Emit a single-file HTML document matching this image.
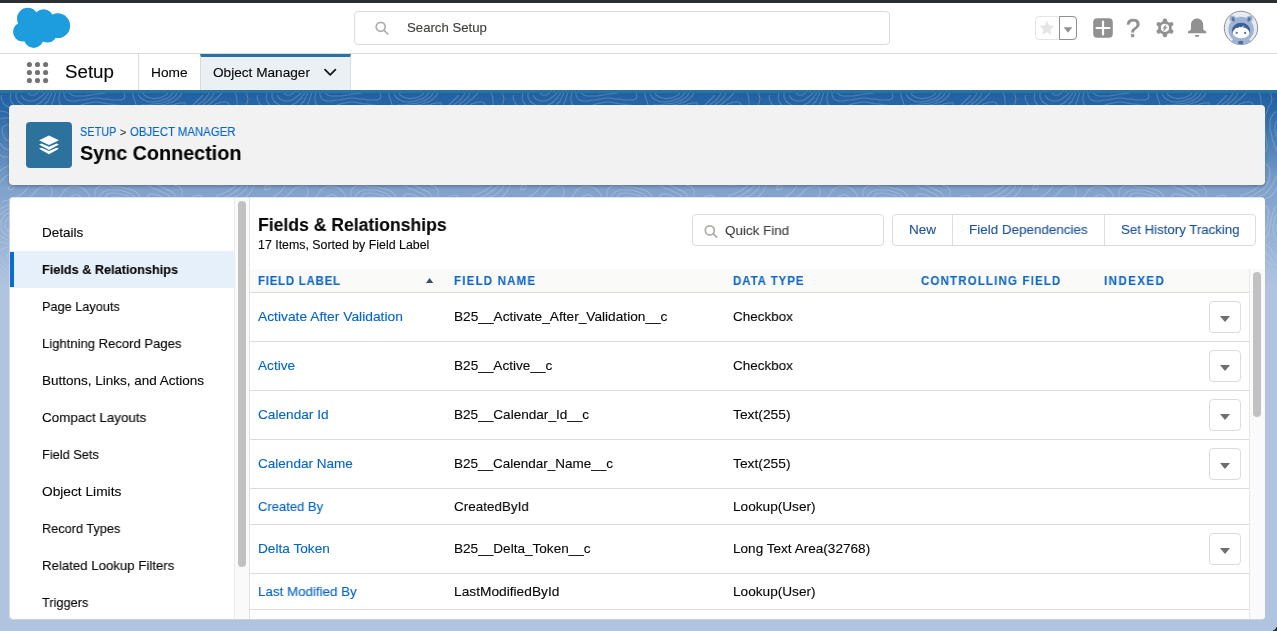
<!DOCTYPE html>
<html lang="en">
<head>
<meta charset="utf-8">
<title>Sync Connection | Salesforce</title>
<style>
*{box-sizing:border-box;margin:0;padding:0}
html,body{width:1277px;height:631px;overflow:hidden}
body{position:relative;background:#b0c4df;font-family:"Liberation Sans",sans-serif;font-size:13px;color:#181818}
.abs{position:absolute}
.t{position:absolute;white-space:pre;line-height:20px;height:20px;transform-origin:0 50%;will-change:transform;-webkit-text-stroke:0.12px}
#bg{left:0;top:93px;width:1277px;height:538px;background:linear-gradient(to bottom,#2060a2 0px,#2b68a7 18px,#80a1cb 95px,#b0c4df 195px)}
#topbar{left:0;top:0;width:1277px;height:3px;background:#2b2e32}
#hdr{left:0;top:3px;width:1277px;height:51px;background:#fff;border-bottom:1px solid #dddbda}
#nav{left:0;top:54px;width:1277px;height:39px;background:#fff;border-bottom:3px solid #2a739e}
#search{left:354px;top:11px;width:536px;height:34px;border:1px solid #dddbda;border-radius:4px;background:#fff}
#tab{left:200px;top:54px;width:151px;height:36px;background:#eaf0f4;border-top:3px solid #2a739e;border-right:1px solid #dcdcdc;border-left:1px solid #dcd8d6}
#div1{left:138px;top:54px;width:1px;height:36px;background:#dddbda}
#ph{left:9px;top:105px;width:1256px;height:80px;background:#f3f2f2;border-radius:4px;box-shadow:0 2px 3px rgba(0,0,0,.22)}
#phicon{left:26px;top:122px;width:46px;height:46px;border-radius:4px;background:#2d729d}
#card{left:9px;top:197px;width:1256px;height:423px;background:#fff;background-clip:padding-box;border-left:1px solid rgba(240,240,240,.55);border-bottom:1px solid rgba(225,225,225,.5);border-radius:4px;overflow:hidden}
#selbg{left:0;top:54px;width:224px;height:37px;background:#e5f0fa}
#selbar{left:0;top:55px;width:4px;height:35px;background:#0b6bd2}
#strack{left:224px;top:0;width:16px;height:423px;background:#fafafa;border-left:1px solid #ebebeb;border-right:1px solid #e4e2e1}
#sthumb{left:228px;top:4px;width:8px;height:366px;background:#c1c1c1;border-radius:4px}
#ttrack{left:1239px;top:72px;width:16px;height:351px;background:#fafafa;border-left:1px solid #e8e8e8}
#tthumb{left:1243px;top:75px;width:8px;height:145px;background:#c1c1c1;border-radius:4px}
#thead{left:240px;top:72px;width:999px;height:24px;background:#fafaf9;border-bottom:1px solid #dddbda}
.rl{position:absolute;left:240px;width:999px;height:1px;background:#dddbda}
.dd{position:absolute;left:1199px;width:32px;height:32px;border:1px solid #dddbda;border-radius:4px;background:#fff}
.dd:after{content:"";position:absolute;left:9.5px;top:13.5px;border-left:5.5px solid transparent;border-right:5.5px solid transparent;border-top:6.5px solid #706e6b}
#qf{left:682px;top:17px;width:192px;height:32px;border:1px solid #dddbda;border-radius:4px;background:#fff}
#bg1{left:882px;top:17px;width:364px;height:32px;border:1px solid #dddbda;border-radius:4px;background:#fff}
.bd{position:absolute;top:18px;width:1px;height:30px;background:#dddbda}
</style>
</head>
<body>
<div id="bg" class="abs"></div>
<svg class="abs" style="left:0;top:93px" width="1277" height="210" viewBox="0 0 1277 210">
<defs>
<pattern id="topo" width="256" height="210" patternUnits="userSpaceOnUse"><path d="M173 30 L174 26 L172 23 L168 22 L167 22 L164 22 L161 24 L159 26 L160 29 L162 31 L166 32 L170 32 L173 30M208 68 L210 66 L211 64 L211 60 L210 58 L208 56 L206 54 L202 53 L198 53 L196 54 L194 57 L194 60 L194 62 L196 65 L198 67 L200 68 L204 69 L208 68M45 210 L45 208 L45 206 L44 205 L43 204 L42 204 L40 203 L38 203 L36 203 L34 203 L32 204 L32 204 L30 206 L30 207 L30 208 L30 210M176 34 L178 32 L178 30 L179 26 L178 23 L176 20 L174 19 L170 18 L166 18 L162 19 L160 20 L156 22 L154 24 L154 26 L154 29 L156 32 L158 33 L160 34 L164 35 L168 35 L172 35 L176 34M211 72 L214 70 L215 68 L216 64 L215 60 L214 58 L212 55 L210 53 L208 52 L204 50 L202 49 L198 49 L194 50 L192 51 L191 54 L190 58 L191 62 L192 66 L193 68 L196 70 L198 71 L200 72 L204 73 L208 73 L211 72M161 142 L164 140 L165 138 L164 136 L160 134 L158 134 L156 134 L152 136 L152 138 L152 140 L155 142 L158 143 L161 142M101 172 L103 170 L103 166 L101 164 L99 162 L96 161 L93 160 L90 160 L88 161 L86 164 L86 166 L86 168 L88 171 L90 173 L94 173 L98 173 L101 172M51 210 L51 206 L50 202 L48 200 L46 199 L43 198 L40 198 L36 198 L34 198 L30 200 L28 200 L26 202 L24 205 L23 208M153 210 L155 208 L157 206 L158 204 L158 202 L156 200 L152 200 L150 200 L147 202 L145 204 L144 207 L144 209M178 38 L180 37 L182 34 L182 32 L183 28 L182 24 L182 22 L181 18 L179 16 L176 15 L172 15 L168 15 L165 16 L162 17 L158 18 L156 19 L153 20 L151 22 L150 24 L149 28 L150 30 L152 33 L154 34 L157 36 L160 37 L164 38 L167 38 L170 38 L174 38 L178 38M217 76 L219 74 L220 70 L220 68 L220 66 L219 62 L218 59 L217 56 L215 54 L213 52 L210 50 L208 49 L206 48 L202 47 L200 46 L196 45 L192 46 L190 46 L188 49 L187 52 L187 56 L188 60 L188 63 L189 66 L190 69 L192 72 L194 74 L196 75 L199 76 L202 77 L206 77 L210 78 L214 77 L217 76M124 118 L126 116 L126 114 L126 112 L124 110 L120 108 L116 108 L114 110 L113 114 L115 116 L118 118 L120 118 L124 118M18 132 L17 130 L16 130 L14 130 L14 130 L13 132 L14 133 L16 134 L18 132M159 146 L162 146 L166 144 L168 142 L170 140 L170 138 L170 134 L168 132 L166 131 L162 130 L159 130 L157 130 L154 130 L150 131 L148 132 L146 135 L146 138 L147 140 L148 142 L151 144 L154 145 L157 146 L159 146M98 178 L102 177 L104 176 L107 174 L109 172 L110 168 L109 164 L107 162 L105 160 L102 158 L100 157 L98 155 L96 154 L93 152 L90 150 L88 150 L84 150 L82 151 L80 153 L78 156 L77 158 L76 161 L75 164 L74 167 L74 170 L74 174 L75 176 L78 178 L80 179 L84 179 L88 179 L92 179 L96 178 L98 178M56 210 L56 208 L57 204 L56 200 L55 198 L53 196 L50 195 L47 194 L44 194 L40 194 L38 194 L34 195 L30 196 L28 196 L24 198 L22 199 L20 201 L19 204 L18 208M158 210 L159 208 L161 206 L162 203 L162 200 L161 198 L158 196 L154 196 L150 197 L148 198 L145 200 L143 202 L142 204 L140 207 L139 210M69 0 L72 2 L74 3 L78 3 L82 3 L86 3 L90 2 L92 2 L96 1 L100 1 L104 0 L106 0M223 92 L226 91 L228 89 L230 86 L230 84 L230 82 L228 78 L227 76 L226 72 L225 70 L224 66 L224 64 L222 60 L221 58 L220 56 L218 53 L216 51 L214 50 L211 48 L208 46 L206 46 L202 44 L200 44 L196 42 L194 42 L190 40 L188 38 L187 36 L186 32 L186 30 L186 26 L186 22 L186 18 L186 14 L185 10 L182 10 L180 10 L176 11 L172 12 L170 12 L166 13 L163 14 L160 15 L156 16 L154 16 L150 18 L148 20 L146 22 L146 24 L146 28 L146 30 L148 34 L150 35 L152 37 L156 38 L158 39 L162 39 L165 40 L168 40 L172 41 L176 42 L178 42 L181 44 L183 46 L184 50 L184 52 L185 56 L185 60 L185 64 L186 68 L186 70 L188 74 L190 76 L192 78 L194 79 L197 80 L200 81 L203 82 L206 83 L208 84 L211 86 L213 88 L215 90 L218 92 L220 92 L223 92M12 48 L14 47 L16 44 L17 42 L17 38 L16 36 L14 34 L10 32 L8 32 L6 32 L3 34 L2 38 L3 42 L4 44 L6 47 L9 48 L12 48M132 122 L133 120 L133 116 L132 113 L130 110 L129 108 L126 106 L124 105 L121 104 L118 104 L114 104 L112 104 L109 106 L108 108 L107 112 L108 116 L109 118 L112 120 L114 121 L116 122 L120 123 L124 123 L128 123 L132 122M197 112 L200 110 L202 108 L203 106 L202 103 L198 102 L194 103 L192 105 L190 108 L190 110 L190 112 L194 113 L197 112M21 140 L24 138 L25 136 L26 134 L26 130 L26 128 L24 125 L22 124 L18 122 L14 122 L10 124 L8 125 L6 128 L5 130 L5 134 L6 136 L8 138 L12 140 L14 141 L18 141 L21 140M163 148 L166 147 L168 146 L171 144 L172 142 L174 139 L175 136 L175 132 L173 130 L170 128 L168 128 L164 127 L160 127 L156 127 L152 127 L148 127 L145 128 L142 129 L141 132 L141 136 L142 138 L144 142 L146 144 L148 146 L150 147 L154 148 L156 148 L160 148 L163 148M60 210 L60 208 L61 204 L62 201 L63 198 L64 194 L65 192 L67 190 L70 188 L72 188 L76 187 L78 186 L82 185 L86 184 L88 184 L92 183 L95 182 L98 181 L102 180 L104 179 L106 178 L109 176 L112 174 L113 172 L114 168 L114 167 L113 164 L112 162 L110 160 L108 158 L105 156 L103 154 L100 152 L98 150 L96 148 L94 146 L92 145 L90 143 L86 142 L82 143 L80 144 L78 146 L76 148 L74 151 L72 154 L70 156 L69 158 L68 160 L66 163 L64 166 L63 168 L62 170 L61 174 L60 178 L60 180 L58 184 L56 186 L54 187 L52 188 L48 189 L44 190 L42 190 L38 191 L34 192 L32 192 L28 193 L24 194 L22 194 L18 196 L16 197 L14 199 L13 202 L13 206 L14 210M248 194 L251 192 L252 190 L252 187 L250 184 L249 182 L247 180 L244 178 L242 176 L240 175 L238 173 L236 172 L233 170 L230 168 L228 168 L228 169 L230 172 L232 174 L233 176 L234 178 L235 182 L236 185 L237 188 L238 191 L240 194 L242 195 L246 195 L248 194M161 210 L162 208 L164 205 L165 202 L165 198 L164 196 L161 194 L158 194 L154 194 L152 194 L148 196 L146 197 L144 198 L142 200 L140 202 L138 205 L137 208 L136 210M64 0 L64 2 L66 6 L68 7 L71 8 L74 8 L76 8 L80 7 L84 7 L88 6 L90 6 L94 5 L98 5 L102 6 L106 6 L108 6 L112 7 L116 7 L120 7 L124 6 L125 4 L124 0M182 0 L181 2 L179 4 L177 6 L174 8 L172 9 L169 10 L166 11 L162 12 L160 12 L156 13 L153 14 L150 15 L147 16 L144 18 L143 20 L142 22 L142 26 L142 29 L143 32 L144 35 L146 37 L148 38 L152 40 L154 40 L158 41 L162 41 L165 42 L168 43 L172 44 L174 44 L177 46 L179 48 L180 50 L182 54 L182 56 L182 60 L183 64 L183 68 L183 72 L182 76 L182 78 L180 81 L177 82 L174 83 L170 83 L168 84 L165 86 L166 89 L168 90 L172 91 L174 92 L178 93 L180 94 L182 98 L182 100 L182 104 L182 108 L182 110 L182 114 L181 118 L180 121 L178 123 L174 124 L171 124 L168 124 L164 124 L160 125 L156 124 L152 124 L150 124 L146 123 L143 122 L140 120 L139 118 L138 116 L136 112 L135 110 L134 108 L132 106 L129 104 L126 102 L124 102 L120 101 L116 100 L112 100 L108 101 L106 103 L104 105 L103 108 L103 112 L103 116 L104 118 L106 121 L108 123 L111 124 L114 125 L118 126 L120 126 L124 127 L128 128 L130 128 L133 130 L135 132 L136 134 L138 138 L139 140 L140 142 L142 144 L144 146 L147 148 L150 149 L153 150 L156 150 L160 151 L164 150 L166 150 L170 148 L172 147 L174 145 L176 142 L177 140 L178 138 L179 134 L180 131 L181 128 L182 125 L184 123 L187 122 L190 121 L193 120 L196 119 L198 117 L200 116 L203 114 L206 112 L208 110 L210 108 L212 107 L214 105 L216 104 L219 102 L222 101 L224 100 L228 98 L230 97 L232 95 L234 94 L236 92 L238 88 L239 86 L239 82 L238 79 L236 76 L235 74 L233 72 L231 70 L230 68 L228 64 L227 62 L226 60 L224 57 L222 54 L220 52 L218 50 L216 48 L214 47 L212 46 L208 44 L206 43 L203 42 L200 41 L198 40 L194 38 L192 36 L191 34 L190 32 L189 28 L189 24 L189 20 L190 17 L191 14 L193 12 L195 10 L197 8 L199 6 L201 4 L203 2M0 50 L2 53 L4 55 L6 56 L10 57 L13 56 L16 54 L18 52 L20 50 L21 48 L22 46 L23 42 L23 38 L22 34 L21 32 L19 30 L16 28 L14 27 L11 26 L8 25 L4 25 L0 26M256 26 L255 26 L254 27 L253 28 L252 30 L252 30 L251 32 L251 34 L251 36 L251 38 L252 40 L252 41 L252 42 L253 44 L254 46 L254 47 L255 48 L256 50 L256 50M129 64 L132 62 L133 60 L133 56 L132 52 L130 50 L128 49 L124 49 L120 49 L118 50 L116 52 L115 56 L116 59 L118 61 L120 63 L123 64 L126 64 L129 64M23 144 L26 143 L28 141 L30 138 L31 136 L31 132 L31 128 L30 124 L29 122 L27 120 L24 118 L22 118 L18 118 L14 118 L12 118 L8 120 L6 121 L4 123 L2 126 L1 128 L1 132 L1 136 L2 138 L4 140 L6 142 L10 144 L12 144 L16 145 L20 145 L23 144M64 210 L65 208 L66 204 L67 202 L68 200 L70 197 L72 195 L74 193 L76 192 L80 190 L82 189 L86 188 L88 187 L92 186 L94 185 L98 184 L100 183 L104 182 L106 181 L108 180 L111 178 L114 176 L115 174 L116 172 L117 168 L117 164 L116 162 L114 160 L112 158 L110 156 L108 154 L105 152 L103 150 L101 148 L100 146 L98 144 L96 142 L94 140 L92 138 L88 137 L84 137 L81 138 L78 140 L76 141 L74 143 L72 145 L70 148 L68 150 L67 152 L65 154 L63 156 L61 158 L59 160 L58 162 L56 165 L55 168 L54 170 L53 174 L52 177 L50 180 L49 182 L46 184 L44 185 L42 186 L38 188 L36 188 L32 189 L28 190 L26 190 L22 191 L18 191 L14 191 L10 190 L8 189 L6 188 L4 186 L2 184 L0 182M256 182 L254 180 L252 178 L250 176 L248 174 L246 171 L244 169 L242 167 L240 165 L238 163 L236 162 L233 160 L230 159 L226 159 L222 160 L220 160 L216 162 L214 163 L212 164 L210 166 L210 168 L212 170 L215 172 L218 174 L220 175 L222 176 L225 178 L227 180 L228 182 L230 186 L230 188 L231 192 L231 196 L232 200 L232 204 L232 206 L236 207 L238 206 L242 205 L244 204 L248 202 L250 202 L254 201M163 210 L165 208 L166 206 L168 202 L168 200 L168 196 L167 194 L165 192 L162 191 L158 191 L154 192 L152 192 L148 194 L146 195 L144 196 L141 198 L139 200 L137 202 L136 204 L134 208 L133 210M0 201 L2 202 L2 202 L4 203 L5 204 L6 205 L7 206 L8 208 L8 208 L9 210M60 0 L59 4 L59 8 L60 11 L62 13 L65 14 L68 14 L72 14 L74 14 L78 13 L81 12 L84 11 L88 10 L90 10 L94 9 L98 9 L102 10 L104 10 L108 11 L112 11 L116 12 L118 12 L122 13 L126 13 L130 13 L134 13 L136 16 L136 18 L137 22 L138 26 L138 28 L139 32 L139 36 L140 38 L142 40 L146 42 L148 42 L152 42 L156 43 L160 43 L164 44 L166 44 L170 45 L172 46 L175 48 L177 50 L178 52 L180 56 L180 59 L180 62 L180 65 L180 68 L178 72 L177 74 L174 76 L172 77 L168 78 L166 78 L162 79 L159 80 L156 81 L154 82 L153 86 L154 89 L156 91 L158 92 L162 94 L164 95 L166 96 L170 98 L172 99 L174 101 L176 104 L177 106 L177 110 L176 114 L175 116 L173 118 L170 120 L168 121 L164 122 L160 122 L156 122 L152 121 L148 120 L146 119 L144 118 L142 115 L140 112 L139 110 L138 108 L136 105 L134 103 L132 102 L129 100 L126 99 L123 98 L120 97 L116 97 L112 97 L108 97 L105 98 L102 100 L100 102 L99 104 L99 108 L99 112 L99 116 L99 120 L100 122 L102 126 L104 127 L108 128 L110 128 L114 128 L118 129 L122 130 L124 130 L128 132 L130 133 L132 135 L134 138 L135 140 L136 142 L138 144 L140 147 L142 148 L146 150 L148 151 L152 152 L154 152 L158 152 L162 152 L166 152 L168 152 L172 150 L174 149 L176 147 L178 144 L179 142 L180 140 L182 136 L183 134 L184 132 L186 130 L188 128 L190 126 L193 124 L196 122 L198 121 L200 120 L203 118 L206 116 L208 114 L210 113 L212 111 L214 110 L217 108 L220 106 L222 105 L225 104 L228 103 L230 102 L233 100 L236 98 L238 97 L240 95 L242 93 L244 90 L244 88 L246 84 L246 82 L246 78 L246 76 L244 73 L242 71 L240 70 L238 68 L236 66 L234 64 L232 62 L230 59 L228 56 L226 54 L224 52 L222 50 L220 48 L218 47 L216 46 L213 44 L210 43 L208 42 L204 40 L202 39 L199 38 L196 36 L194 34 L193 32 L192 28 L192 26 L192 22 L193 20 L194 17 L196 14 L198 12 L200 10 L202 9 L204 7 L206 5 L208 2 L209 0M177 0 L176 2 L174 4 L171 6 L168 8 L166 8 L162 10 L160 10 L156 11 L152 11 L148 12 L146 12 L142 12 L138 13 L136 12 L135 8 L134 6 L133 2 L132 0M0 62 L3 64 L6 64 L10 64 L12 63 L15 62 L18 60 L20 58 L22 56 L23 54 L24 52 L26 48 L27 46 L28 42 L28 40 L28 36 L28 34 L26 30 L24 28 L22 26 L20 25 L18 24 L14 22 L12 21 L8 20 L6 19 L2 18 L0 18M256 18 L254 18 L250 20 L249 22 L247 24 L246 28 L246 30 L246 34 L246 37 L247 40 L248 44 L248 46 L250 50 L250 52 L252 56 L253 58 L254 60 L256 62M134 68 L136 66 L137 64 L138 60 L138 58 L138 54 L138 52 L137 48 L136 46 L132 44 L130 44 L126 44 L124 44 L120 45 L116 46 L114 46 L111 48 L110 50 L109 54 L110 57 L111 60 L113 62 L115 64 L118 66 L120 67 L122 68 L126 69 L130 69 L134 68M0 143 L2 144 L6 146 L8 147 L12 148 L16 148 L18 148 L22 148 L24 148 L28 147 L31 146 L33 144 L34 142 L35 138 L36 134 L36 130 L36 126 L35 122 L35 118 L34 116 L32 114 L28 113 L24 113 L20 113 L16 114 L14 114 L10 115 L8 116 L4 118 L2 120 L0 122M256 122 L255 124 L254 126 L254 127 L254 128 L253 130 L253 132 L253 134 L253 136 L253 138 L254 140 L254 140 L255 142 L256 143M68 210 L69 208 L70 205 L72 202 L73 200 L75 198 L78 196 L80 194 L82 193 L85 192 L88 190 L90 190 L94 188 L96 187 L99 186 L102 185 L105 184 L108 183 L110 182 L113 180 L115 178 L117 176 L119 174 L120 171 L121 168 L120 164 L120 162 L118 159 L116 157 L114 155 L112 154 L110 152 L108 150 L106 148 L104 146 L102 143 L101 140 L100 138 L98 135 L96 133 L94 132 L90 131 L86 132 L84 132 L80 134 L78 134 L75 136 L73 138 L71 140 L69 142 L67 144 L66 146 L64 148 L62 150 L59 152 L57 154 L54 156 L52 158 L51 160 L50 162 L48 166 L48 169 L47 172 L46 176 L45 178 L44 180 L41 182 L38 184 L36 185 L32 186 L30 186 L26 187 L22 187 L18 187 L14 186 L12 186 L9 184 L6 182 L4 180 L2 178 L0 176M256 176 L254 174 L252 172 L250 170 L249 168 L247 166 L246 164 L244 162 L242 160 L240 158 L236 156 L234 155 L230 155 L226 155 L222 156 L220 156 L216 157 L214 158 L210 160 L208 160 L205 162 L202 163 L200 165 L198 167 L196 170 L198 172 L202 173 L205 174 L208 175 L212 176 L214 177 L217 178 L220 180 L222 182 L224 184 L225 186 L226 189 L227 192 L227 196 L226 199 L225 202 L224 205 L223 208 L222 210M166 210 L167 208 L168 206 L170 202 L170 200 L171 196 L171 192 L169 190 L166 189 L162 189 L158 189 L154 190 L152 191 L148 192 L146 193 L144 194 L141 196 L138 198 L136 200 L135 202 L134 204 L132 207 L130 210M0 78 L2 76 L4 75 L6 74 L10 72 L12 71 L14 70 L18 68 L20 66 L22 64 L24 62 L25 60 L26 58 L28 55 L29 52 L30 50 L31 46 L32 42 L32 40 L33 36 L33 32 L32 28 L31 26 L28 24 L26 23 L24 22 L20 20 L18 19 L15 18 L12 16 L10 15 L8 14 L5 12 L3 10 L2 8 L1 4 L2 2M56 0 L55 2 L54 5 L53 8 L52 11 L52 14 L53 16 L55 18 L58 19 L62 20 L64 20 L68 20 L72 20 L76 20 L78 20 L82 18 L84 18 L88 16 L90 15 L94 15 L98 14 L102 14 L106 15 L110 15 L114 16 L116 16 L120 17 L124 18 L126 18 L129 20 L131 22 L132 24 L134 28 L134 32 L133 36 L130 38 L128 39 L124 40 L122 40 L118 41 L114 41 L110 42 L108 43 L106 44 L104 46 L103 50 L104 54 L105 56 L106 59 L108 62 L109 64 L111 66 L114 68 L116 69 L118 70 L122 72 L124 72 L128 73 L132 74 L135 74 L138 74 L140 73 L141 70 L142 66 L142 62 L142 58 L142 55 L142 52 L144 48 L146 47 L148 46 L152 45 L156 45 L160 45 L164 46 L166 46 L170 48 L172 49 L174 51 L176 53 L177 56 L178 60 L177 64 L176 68 L175 70 L173 72 L170 74 L168 74 L164 75 L160 76 L156 76 L154 76 L150 76 L146 77 L144 80 L144 84 L145 88 L146 90 L148 92 L151 94 L154 96 L156 96 L160 98 L162 99 L165 100 L168 102 L170 104 L171 106 L172 110 L171 114 L169 116 L166 118 L164 118 L160 119 L156 119 L152 118 L150 117 L148 116 L146 114 L144 111 L142 108 L141 106 L140 103 L138 101 L136 99 L134 98 L130 96 L128 96 L124 95 L120 94 L118 94 L114 94 L110 93 L106 93 L102 93 L98 94 L96 96 L95 98 L95 102 L95 106 L95 110 L94 114 L94 118 L94 120 L92 123 L90 125 L88 126 L84 128 L82 128 L78 130 L76 131 L74 132 L71 134 L69 136 L67 138 L65 140 L63 142 L61 144 L58 146 L56 148 L54 149 L50 150 L48 151 L44 151 L42 150 L41 146 L40 142 L40 138 L40 134 L40 130 L41 126 L42 122 L43 120 L44 117 L46 114 L47 112 L48 110 L50 107 L51 104 L52 100 L52 98 L52 96 L50 93 L46 93 L42 94 L40 95 L38 96 L36 98 L34 100 L32 102 L29 104 L26 106 L24 107 L21 108 L18 109 L14 110 L12 111 L8 112 L6 113 L3 114 L0 116M173 0 L171 2 L169 4 L166 6 L164 6 L160 8 L158 8 L154 9 L150 9 L146 8 L144 7 L142 6 L140 4 L138 1M246 0 L247 2 L248 6 L248 6 L247 10 L246 12 L244 15 L243 18 L242 21 L241 24 L241 28 L241 32 L241 36 L241 40 L242 43 L242 46 L243 50 L243 54 L242 58 L240 58 L238 58 L235 56 L232 54 L230 52 L228 50 L226 49 L224 47 L222 46 L219 44 L216 43 L214 42 L210 40 L208 40 L204 38 L202 37 L200 35 L198 34 L196 31 L195 28 L195 24 L196 20 L197 18 L198 16 L200 14 L203 12 L205 10 L208 8 L210 6 L212 4 L213 2 L214 0M72 210 L72 208 L74 205 L76 202 L78 200 L80 198 L82 197 L84 196 L87 194 L90 192 L92 191 L95 190 L98 189 L100 188 L104 187 L106 186 L110 184 L112 183 L114 182 L117 180 L119 178 L120 176 L122 173 L123 170 L124 166 L123 162 L122 159 L120 156 L118 154 L116 153 L114 151 L112 149 L110 147 L108 145 L107 142 L106 140 L106 136 L107 134 L110 133 L114 132 L118 132 L122 133 L124 134 L128 136 L130 138 L131 140 L133 142 L134 144 L136 147 L138 149 L140 150 L144 152 L146 152 L150 153 L154 154 L156 154 L160 154 L164 154 L168 154 L170 154 L174 152 L176 151 L178 149 L180 147 L182 144 L183 142 L184 139 L186 136 L187 134 L188 132 L190 130 L193 128 L196 126 L198 125 L200 123 L202 122 L205 120 L208 118 L210 116 L212 115 L214 114 L216 112 L220 110 L222 109 L224 108 L228 106 L230 106 L234 104 L236 103 L239 102 L242 100 L244 98 L246 96 L247 94 L248 92 L250 89 L251 86 L252 84 L254 81 L256 78M256 116 L254 119 L252 122 L251 124 L250 128 L250 130 L249 134 L249 138 L250 142 L250 144 L252 147 L254 148M0 149 L4 150 L6 150 L10 151 L14 151 L18 151 L22 152 L26 152 L28 152 L32 152 L36 152 L40 153 L41 156 L42 159 L42 162 L43 166 L42 170 L42 172 L41 176 L39 178 L37 180 L34 182 L32 182 L28 183 L24 184 L20 184 L16 183 L13 182 L10 180 L8 179 L6 177 L4 175 L2 173 L0 171M256 171 L254 168 L252 166 L251 164 L250 162 L248 158 L247 156 L245 154 L242 152 L240 152 L236 151 L232 152 L228 152 L226 152 L222 153 L218 154 L216 154 L212 155 L210 156 L206 157 L204 158 L200 160 L198 161 L195 162 L192 164 L190 165 L188 168 L187 170 L186 174 L188 177 L192 177 L196 178 L200 178 L204 178 L206 178 L210 179 L213 180 L216 181 L218 183 L220 185 L222 188 L222 190 L223 194 L222 198 L222 200 L221 204 L220 206 L218 209M168 210 L170 207 L171 204 L172 202 L173 198 L174 195 L174 192 L174 188 L172 186 L168 186 L164 186 L160 187 L156 188 L154 188 L150 189 L148 190 L144 192 L142 193 L140 194 L137 196 L135 198 L134 200 L132 203 L130 206 L129 208 L127 210M52 0 L51 2 L50 4 L48 8 L46 10 L45 12 L44 14 L42 16 L40 18 L36 19 L32 19 L28 18 L26 18 L22 16 L20 16 L17 14 L14 12 L12 10 L11 8 L10 4 L11 0M168 0 L166 2 L166 2 L164 3 L162 4 L162 4 L160 5 L158 5 L156 5 L154 6 L152 5 L150 5 L148 4 L147 4 L146 3 L144 2 L144 2 L143 0M235 0 L236 2 L237 6 L237 10 L237 14 L237 18 L237 22 L236 26 L236 30 L236 34 L236 36 L235 40 L234 43 L232 44 L228 44 L226 44 L222 42 L220 41 L216 40 L214 39 L210 38 L208 37 L206 36 L203 34 L200 32 L199 30 L198 27 L198 24 L198 22 L200 19 L202 17 L204 15 L206 13 L208 12 L211 10 L213 8 L216 6 L218 4 L220 2 L222 0M118 36 L114 36 L110 36 L108 36 L104 34 L102 33 L100 32 L98 29 L97 26 L98 24 L100 22 L104 21 L108 20 L112 20 L116 21 L120 21 L122 22 L125 24 L127 26 L128 30 L126 33 L124 35 L120 36 L118 36M0 90 L2 87 L4 85 L6 83 L8 82 L11 80 L14 79 L16 78 L20 76 L22 75 L24 73 L26 71 L28 68 L29 66 L30 64 L32 60 L32 58 L33 54 L34 51 L35 48 L36 44 L36 42 L37 38 L38 34 L39 32 L40 29 L42 26 L44 24 L46 24 L50 24 L53 24 L56 24 L60 25 L64 25 L68 26 L70 26 L74 28 L76 28 L79 30 L82 32 L84 34 L86 35 L88 38 L90 40 L92 42 L93 44 L94 46 L96 49 L97 52 L98 54 L100 58 L101 60 L102 62 L104 65 L106 67 L108 69 L110 71 L112 72 L116 74 L118 75 L122 76 L124 77 L128 78 L130 79 L132 80 L134 82 L136 85 L136 88 L135 90 L132 91 L128 91 L124 91 L120 91 L116 90 L114 90 L110 89 L107 88 L104 87 L100 86 L98 85 L96 84 L92 82 L90 81 L88 80 L85 78 L82 76 L80 75 L77 74 L74 73 L70 72 L68 72 L64 72 L62 72 L58 73 L56 74 L52 76 L50 77 L47 78 L44 80 L42 80 L39 82 L36 84 L34 85 L32 87 L30 90 L29 92 L28 94 L26 97 L24 99 L22 101 L20 102 L17 104 L14 105 L12 106 L8 107 L4 108 L2 109M164 72 L160 72 L156 72 L154 72 L150 70 L148 69 L146 66 L146 64 L145 60 L145 56 L146 54 L148 50 L150 49 L153 48 L156 47 L160 47 L164 48 L166 49 L169 50 L172 52 L173 54 L174 56 L175 60 L174 64 L174 66 L172 68 L170 70 L166 72 L164 72M76 210 L77 208 L78 206 L80 203 L82 201 L84 199 L86 198 L89 196 L92 194 L94 193 L96 192 L100 190 L102 190 L106 188 L108 187 L111 186 L114 184 L116 183 L118 182 L120 180 L122 178 L124 175 L125 172 L126 169 L127 166 L127 162 L126 158 L126 156 L124 154 L122 152 L119 150 L116 148 L114 146 L113 144 L112 140 L114 138 L118 137 L122 138 L124 139 L126 140 L128 143 L130 146 L131 148 L133 150 L136 152 L138 153 L142 154 L144 154 L148 155 L152 156 L156 156 L158 156 L162 156 L166 156 L170 156 L174 156 L176 156 L180 154 L182 152 L183 150 L184 147 L185 144 L186 142 L188 138 L189 136 L191 134 L193 132 L195 130 L198 128 L200 126 L202 125 L204 124 L206 122 L209 120 L212 118 L214 117 L216 115 L218 114 L222 112 L224 111 L227 110 L230 109 L234 108 L236 107 L240 106 L242 106 L246 104 L248 102 L250 100 L251 98 L252 96 L254 93 L256 90M56 140 L52 141 L49 140 L47 138 L46 134 L46 130 L47 126 L48 124 L50 121 L52 118 L54 116 L55 114 L56 112 L58 109 L59 106 L60 104 L62 101 L64 98 L66 96 L68 95 L70 94 L74 93 L78 94 L80 94 L84 96 L86 98 L88 100 L89 102 L90 106 L90 108 L90 112 L90 114 L89 118 L87 120 L85 122 L82 123 L80 124 L76 126 L74 127 L71 128 L68 130 L66 132 L64 134 L62 136 L60 137 L58 139 L56 140M162 115 L158 115 L154 115 L152 114 L150 112 L148 109 L147 106 L148 103 L150 101 L154 101 L158 102 L160 103 L163 104 L165 106 L166 108 L166 111 L164 114 L162 115M256 110 L254 111 L252 113 L250 116 L250 118 L248 122 L248 124 L247 128 L246 132 L246 134 L245 138 L244 142 L243 144 L240 146 L238 147 L234 148 L232 148 L228 149 L224 150 L222 150 L218 151 L214 152 L212 153 L208 154 L206 154 L202 155 L200 156 L196 157 L192 158 L190 159 L187 160 L184 162 L183 164 L182 166 L181 170 L180 172 L178 176 L177 178 L175 180 L172 181 L170 182 L166 183 L164 184 L160 185 L156 186 L154 187 L150 188 L148 188 L144 190 L142 191 L139 192 L137 194 L134 196 L133 198 L131 200 L130 202 L128 205 L126 208 L125 210M0 158 L2 156 L4 155 L8 154 L12 154 L16 155 L20 155 L24 156 L26 156 L30 158 L32 159 L34 160 L36 164 L37 166 L37 170 L36 174 L35 176 L32 178 L30 179 L27 180 L24 180 L20 180 L18 180 L14 178 L12 177 L10 176 L8 174 L6 172 L4 170 L2 167 L1 164M170 210 L172 207 L173 204 L174 202 L176 198 L176 196 L178 192 L179 190 L180 188 L182 186 L184 184 L188 183 L190 182 L194 181 L198 181 L202 181 L206 181 L210 182 L212 183 L214 184 L216 186 L218 188 L219 192 L219 196 L219 200 L218 202 L216 206 L215 208 L214 210M49 0 L47 2 L46 4 L44 6 L42 8 L40 10 L36 12 L34 13 L30 13 L26 13 L24 12 L20 10 L18 8 L17 6 L16 4 L16 0M226 38 L222 38 L220 38 L216 37 L212 36 L210 35 L208 34 L205 32 L203 30 L202 28 L201 24 L202 22 L204 19 L206 17 L208 16 L211 14 L214 12 L216 11 L219 10 L222 9 L226 9 L228 10 L230 13 L231 16 L232 20 L232 24 L232 28 L231 32 L230 35 L228 37 L226 38M94 71 L90 70 L88 70 L84 68 L82 67 L78 66 L76 65 L72 64 L70 64 L66 64 L62 64 L60 64 L56 65 L52 65 L48 66 L44 66 L41 64 L40 62 L39 58 L39 54 L39 50 L40 46 L40 44 L41 40 L42 38 L44 34 L46 32 L48 31 L50 30 L54 29 L58 29 L62 30 L64 30 L68 32 L70 33 L72 34 L74 36 L77 38 L78 40 L80 42 L82 44 L84 46 L86 48 L88 50 L90 53 L92 56 L93 58 L94 60 L96 64 L96 66 L96 70 L94 71M166 68 L162 69 L158 69 L154 68 L152 66 L150 64 L149 62 L149 58 L150 54 L152 52 L154 51 L158 50 L160 50 L162 50 L166 51 L168 52 L170 54 L172 58 L172 60 L172 62 L170 66 L168 67 L166 68M12 96 L10 97 L8 96 L9 94 L10 93 L12 92 L12 92 L13 92 L14 93 L14 94 L14 94 L13 96 L12 96M74 120 L70 121 L66 121 L64 119 L64 116 L64 114 L66 110 L67 108 L68 106 L70 104 L74 102 L76 102 L78 102 L81 104 L83 106 L84 109 L84 112 L83 114 L82 116 L80 118 L76 120 L74 120M202 152 L198 153 L194 153 L191 152 L189 150 L189 146 L190 142 L191 140 L192 137 L194 135 L196 133 L198 131 L200 129 L202 128 L205 126 L208 124 L210 122 L212 121 L214 120 L217 118 L220 116 L222 115 L225 114 L228 113 L232 112 L234 112 L238 112 L240 112 L243 114 L244 116 L245 120 L244 124 L244 127 L244 130 L243 134 L242 136 L240 140 L238 142 L236 143 L234 144 L230 145 L228 146 L224 147 L220 148 L218 148 L214 149 L211 150 L208 151 L204 152 L202 152M80 210 L81 208 L82 206 L84 203 L86 201 L88 200 L90 198 L94 196 L96 195 L98 194 L102 192 L104 191 L106 190 L110 189 L112 188 L116 186 L118 185 L120 184 L122 182 L124 180 L126 177 L127 174 L128 172 L129 168 L130 165 L131 162 L132 159 L134 157 L138 157 L142 157 L146 157 L150 157 L154 158 L158 158 L160 158 L164 159 L168 159 L172 160 L174 161 L176 163 L177 166 L176 169 L175 172 L174 174 L172 177 L170 178 L168 180 L164 182 L162 182 L158 184 L156 184 L152 185 L150 186 L146 187 L143 188 L140 189 L138 190 L135 192 L133 194 L131 196 L130 198 L128 201 L126 204 L125 206 L123 208 L122 210M24 176 L20 176 L18 175 L15 174 L12 172 L10 170 L9 168 L8 166 L7 162 L9 160 L12 159 L16 159 L20 159 L22 160 L26 162 L28 163 L30 165 L31 168 L30 172 L29 174 L26 176 L24 176M173 210 L174 207 L175 204 L176 202 L178 198 L179 196 L180 194 L182 191 L184 189 L186 188 L189 186 L192 185 L196 184 L198 184 L202 184 L205 184 L208 185 L211 186 L214 188 L215 190 L216 193 L216 196 L216 199 L215 202 L214 204 L212 208 L211 210M45 0 L43 2 L40 4 L38 6 L36 7 L32 8 L30 8 L28 8 L24 6 L22 4 L21 2M222 33 L218 34 L214 33 L211 32 L208 30 L206 28 L206 26 L206 24 L208 20 L210 19 L212 18 L216 16 L218 16 L221 16 L224 18 L225 20 L226 22 L226 26 L226 29 L224 32 L222 33M62 56 L58 57 L54 57 L51 56 L48 54 L46 52 L46 50 L46 46 L46 44 L48 40 L49 38 L52 36 L54 35 L58 35 L62 36 L64 37 L66 38 L69 40 L70 42 L72 45 L73 48 L74 52 L71 54 L68 55 L64 56 L62 56M166 64 L162 66 L158 65 L156 64 L154 62 L153 58 L154 56 L156 54 L160 53 L164 54 L166 55 L168 58 L168 60 L168 62 L166 64M206 148 L202 149 L198 148 L196 147 L194 144 L195 140 L196 138 L198 135 L200 133 L202 131 L204 130 L206 128 L209 126 L212 124 L214 123 L216 121 L218 120 L222 118 L224 117 L228 116 L230 116 L234 116 L236 117 L238 118 L240 121 L240 124 L240 128 L240 130 L239 134 L238 136 L236 138 L234 140 L230 142 L228 143 L224 144 L222 145 L218 146 L216 146 L212 147 L208 148 L206 148M85 210 L86 207 L88 204 L90 202 L92 200 L94 199 L96 197 L99 196 L102 194 L104 193 L107 192 L110 191 L113 190 L116 189 L118 188 L122 186 L124 185 L126 183 L128 180 L129 178 L130 174 L131 172 L132 168 L133 166 L134 164 L136 161 L139 160 L142 159 L146 159 L150 159 L154 159 L158 160 L160 160 L164 161 L167 162 L170 164 L171 166 L172 170 L170 174 L168 176 L166 178 L164 179 L162 180 L158 182 L156 182 L152 184 L150 184 L146 185 L143 186 L140 187 L137 188 L134 189 L132 191 L130 193 L128 196 L127 198 L126 200 L124 203 L122 206 L120 208 L119 210M175 210 L176 208 L178 204 L178 202 L180 199 L182 196 L183 194 L185 192 L187 190 L190 189 L192 188 L196 187 L200 186 L204 187 L208 188 L210 189 L212 192 L213 194 L213 198 L212 202 L211 204 L210 207 L208 210M38 0 L38 0 L36 1 L34 2 L33 2 L32 2 L32 2 L30 2 L28 0 L28 0M208 144 L205 144 L202 143 L201 140 L202 137 L204 134 L206 132 L208 131 L210 129 L212 127 L214 126 L217 124 L220 122 L222 122 L226 120 L230 120 L234 122 L236 124 L236 126 L236 130 L235 132 L234 135 L232 137 L230 138 L226 140 L224 141 L220 142 L218 142 L214 143 L210 144 L208 144M140 184 L136 184 L134 184 L132 180 L133 176 L134 172 L134 170 L136 167 L138 164 L140 163 L142 162 L146 161 L150 161 L154 161 L158 162 L160 163 L164 164 L166 166 L167 168 L167 172 L166 174 L164 176 L161 178 L158 179 L156 180 L152 182 L150 182 L146 183 L142 184 L140 184M178 210 L178 208 L180 204 L181 202 L182 200 L184 197 L186 195 L188 193 L190 192 L194 190 L196 189 L200 189 L204 190 L206 191 L208 192 L210 196 L210 198 L210 200 L208 204 L207 206 L206 208M90 210 L90 208 L92 205 L94 203 L96 201 L98 199 L100 198 L104 196 L106 195 L109 194 L112 193 L116 192 L118 192 L122 192 L124 194 L123 198 L122 200 L120 204 L119 206 L117 208 L115 210M218 138 L214 138 L212 138 L211 134 L213 132 L215 130 L218 128 L220 127 L222 126 L226 125 L229 126 L230 128 L230 131 L228 134 L226 135 L224 137 L220 138 L218 138M148 180 L144 181 L140 180 L138 179 L137 176 L137 172 L138 170 L140 167 L142 165 L146 164 L148 164 L152 164 L155 164 L158 165 L161 166 L162 168 L163 172 L161 174 L159 176 L156 178 L154 179 L150 180 L148 180M181 210 L182 206 L183 204 L184 201 L186 198 L188 196 L190 195 L192 194 L196 192 L200 192 L204 194 L206 196 L206 198 L206 202 L205 204 L204 206 L202 209M97 210 L97 206 L98 204 L100 202 L103 200 L106 199 L108 198 L112 197 L116 197 L117 200 L116 204 L114 206 L112 208 L110 209M152 176 L148 177 L144 177 L142 175 L142 172 L143 170 L145 168 L148 167 L152 167 L156 168 L158 170 L156 174 L154 175 L152 176M185 210 L185 206 L186 204 L188 201 L190 199 L192 197 L195 196 L198 196 L200 196 L202 198 L202 202 L202 204 L200 207 L198 209" fill="none" stroke="#fff" stroke-width="1.1" stroke-linejoin="round"/></pattern>
<linearGradient id="fade" x1="0" y1="0" x2="0" y2="1"><stop offset="0" stop-color="#fff" stop-opacity="0.2"/><stop offset="0.6" stop-color="#fff" stop-opacity="0.2"/><stop offset="1" stop-color="#fff" stop-opacity="0"/></linearGradient>
<mask id="fm"><rect width="1277" height="210" fill="url(#fade)"/></mask>
</defs>
<rect width="1277" height="210" fill="url(#topo)" mask="url(#fm)"/>
</svg>
<div id="topbar" class="abs"></div>
<div id="hdr" class="abs"></div>
<div id="nav" class="abs"></div>
<div id="div1" class="abs"></div>
<div id="tab" class="abs"></div>
<div id="search" class="abs"></div>
<div id="ph" class="abs"></div>
<div id="phicon" class="abs"></div>
<div id="card" class="abs">
  <div class="abs" style="left:0;top:0;width:1256px;height:1px;background:rgba(176,196,223,.45);z-index:5"></div>
  <div id="selbg" class="abs"></div>
  <div id="selbar" class="abs"></div>
  <div id="strack" class="abs"></div>
  <div id="sthumb" class="abs"></div>
  <div id="thead" class="abs"></div>
  <div class="rl" style="top:144px"></div>
  <div class="rl" style="top:193px"></div>
  <div class="rl" style="top:242px"></div>
  <div class="rl" style="top:291px"></div>
  <div class="rl" style="top:327px"></div>
  <div class="rl" style="top:376px"></div>
  <div class="rl" style="top:412px"></div>
  <div id="ttrack" class="abs"></div>
  <div id="tthumb" class="abs"></div>
  <div class="dd" style="top:104px"></div>
  <div class="dd" style="top:153px"></div>
  <div class="dd" style="top:202px"></div>
  <div class="dd" style="top:251px"></div>
  <div class="dd" style="top:336px"></div>
  <div id="qf" class="abs"></div>
  <div id="bg1" class="abs"></div>
  <div class="bd" style="left:942px"></div>
  <div class="bd" style="left:1094px"></div>
</div>
<div class="abs" style="right:0;bottom:0;width:4px;height:4px;background:radial-gradient(circle at 0 0,rgba(34,34,34,0) 2.6px,#2a2a2a 3.6px)"></div>
<svg class="abs" style="left:0;top:0" width="1277" height="631" viewBox="0 0 1277 631">
  <!-- salesforce cloud -->
  <g fill="#1d9ddd">
    <circle cx="27.7" cy="18.5" r="10.7"/>
    <circle cx="43.5" cy="19.1" r="9.9"/>
    <circle cx="57.7" cy="25.7" r="12.4"/>
    <circle cx="22.7" cy="31.8" r="9.7"/>
    <circle cx="33.7" cy="38.1" r="9.8"/>
    <circle cx="47.5" cy="33.3" r="9.3"/>
    <circle cx="38" cy="27" r="10"/>
  </g>
  <!-- header search icon -->
  <g fill="none" stroke="#aeaba8" stroke-width="1.7" stroke-linecap="round">
    <circle cx="380.7" cy="26.8" r="4.5"/>
    <path d="M384.1 30.3 L387.8 34"/>
  </g>
  <!-- app launcher -->
  <g fill="#747270">
    <circle cx="29.4" cy="64.5" r="2.55"/><circle cx="37.5" cy="64.5" r="2.55"/><circle cx="45.6" cy="64.5" r="2.55"/>
    <circle cx="29.4" cy="72.5" r="2.55"/><circle cx="37.5" cy="72.5" r="2.55"/><circle cx="45.6" cy="72.5" r="2.55"/>
    <circle cx="29.4" cy="80.5" r="2.55"/><circle cx="37.5" cy="80.5" r="2.55"/><circle cx="45.6" cy="80.5" r="2.55"/>
  </g>
  <!-- tab chevron -->
  <path d="M325 69.6 L330.2 74.8 L335.4 69.6" fill="none" stroke="#181818" stroke-width="1.8" stroke-linecap="round" stroke-linejoin="round"/>
  <!-- favorites -->
  <rect x="1035.5" y="16.5" width="41" height="23" rx="3.5" fill="#fff" stroke="#e4e4e4"/>
  <path d="M1059.5 16.5 H1073 a3.5 3.5 0 0 1 3.5 3.5 V36 a3.5 3.5 0 0 1 -3.5 3.5 H1059.5 Z" fill="#fff" stroke="#8f8f8f"/>
  <path d="M1046.9 20.7 l2.1 4.9 5.3 0.5 -4 3.5 1.2 5.2 -4.6 -2.7 -4.6 2.7 1.2 -5.2 -4 -3.5 5.3 -0.5z" fill="#e5e5e5"/>
  <path d="M1063.6 27.2 h8.8 l-4.4 5.6z" fill="#929292"/>
  <!-- plus -->
  <rect x="1093.2" y="18.2" width="19.6" height="19.6" rx="4" fill="#919191"/>
  <path d="M1103 21.6 V34.4 M1096.6 28 H1109.4" stroke="#fff" stroke-width="2.2" stroke-linecap="round"/>
  <!-- gear -->
  <g transform="translate(1164.95 27.85)">
    <g fill="#919191">
      <rect x="-2.1" y="-9.3" width="4.2" height="18.6" rx="1.7"/>
      <rect x="-2.1" y="-9.3" width="4.2" height="18.6" rx="1.7" transform="rotate(60)"/>
      <rect x="-2.1" y="-9.3" width="4.2" height="18.6" rx="1.7" transform="rotate(120)"/>
      <circle r="6.8"/>
    </g>
    <circle r="4.1" fill="#fff"/>
    <path d="M1.3 -3.2 L-2.1 0.5 H-0.2 L-1.3 3.2 L2.1 -0.5 H0.2 Z" fill="#919191" stroke="#919191" stroke-width="0.5" stroke-linejoin="round"/>
  </g>
  <!-- bell -->
  <g fill="#919191">
    <path d="M1197.1 18.6 c3.4 0 6.1 2.6 6.1 6.1 v3.8 c0 1.1 0.7 1.9 2.1 2.5 h0.1 a0.9 0.9 0 0 1 0.9 0.9 v0.5 a0.9 0.9 0 0 1 -0.9 0.9 h-16.6 a0.9 0.9 0 0 1 -0.9 -0.9 v-0.5 a0.9 0.9 0 0 1 0.9 -0.9 h0.1 c1.4 -0.6 2.1 -1.4 2.1 -2.5 v-3.8 c0 -3.5 2.7 -6.1 6.1 -6.1z"/>
    <path d="M1194.7 35 h4.7 a2.35 2 0 0 1 -4.7 0z"/>
  </g>
  <!-- avatar -->
  <defs><clipPath id="avc"><circle cx="1241" cy="27.9" r="16.5"/></clipPath></defs>
  <circle cx="1241" cy="27.9" r="16.7" fill="#e6eaf2" stroke="#777" stroke-width="0.8"/>
  <g clip-path="url(#avc)">
    <path d="M1230.6 20.6 q-0.9 -4.6 1.6 -4.3 q2.2 0.6 4.2 2.7z M1251.6 20.6 q0.9 -4.6 -1.6 -4.3 q-2.2 0.6 -4.2 2.7z" fill="#9fb3d5" stroke="#9fb3d5" stroke-width="1.6" stroke-linejoin="round"/>
    <circle cx="1241.1" cy="29.4" r="12.7" fill="#9fb3d5"/>
    <path d="M1230.5 46 q0.5 -7 5 -8 h11.2 q4.5 1 5 8z" fill="#9fb3d5"/>
    <ellipse cx="1233.2" cy="19.3" rx="1.5" ry="2.3" transform="rotate(-22 1233.2 19.3)" fill="#56749f"/>
    <ellipse cx="1249" cy="19.3" rx="1.5" ry="2.3" transform="rotate(22 1249 19.3)" fill="#56749f"/>
    <ellipse cx="1241.1" cy="30.6" rx="9" ry="7.8" fill="#3f5f93"/>
    <ellipse cx="1241.1" cy="32.8" rx="8.3" ry="5.6" fill="#fff"/>
    <path d="M1234.6 30.8 l1.4 -3.4 l1.5 1.5 l2.5 -2.5 l0.6 1.9 l3.3 -3.1 l-1.1 3.2 l2.9 -1.1 l-1.5 2.3 l2.6 0.3 l1 2 h-13z" fill="#fff"/>
    <circle cx="1236.7" cy="32.8" r="1.15" fill="#5373a6"/>
    <circle cx="1245.1" cy="32.9" r="1.15" fill="#5373a6"/>
    <ellipse cx="1240.7" cy="42.5" rx="2.8" ry="1.7" fill="#4f6d9e"/>
  </g>
  <!-- page header icon -->
  <g fill="#fff">
    <path d="M49 135.4 L58.9 140.2 L49 145.1 L39.1 140.2z"/>
    <path d="M39.1 144.5 l2.3 -1.1 L49 146.8 l7.6 -3.4 2.3 1.1 L49 150z"/>
    <path d="M39.1 148.8 l2.3 -1.1 L49 151.1 l7.6 -3.4 2.3 1.1 L49 154.3z"/>
  </g>
  <!-- quick find icon -->
  <g fill="none" stroke="#aeaba8" stroke-width="1.7" stroke-linecap="round">
    <circle cx="709.8" cy="230.4" r="4.5"/>
    <path d="M713.2 233.8 L716.7 237.2"/>
  </g>
  <!-- sort arrow -->
  <path d="M426 283.1 h7.2 l-3.6 -5.1z" fill="#3a4f6e"/>
</svg>

<div class="t" style="left:407px;top:18px;font-size:13.2px;color:#3e3e3c;">Search Setup</div>
<div class="t" style="left:65px;top:62px;font-size:18px;color:#080707;transform:scaleX(1.0391);">Setup</div>
<div class="t" style="left:151px;top:63px;font-size:13.5px;color:#080707;transform:scaleX(1.0139);">Home</div>
<div class="t" style="left:213px;top:63px;font-size:13.5px;color:#080707;transform:scaleX(1.0094);">Object Manager</div>
<div class="t" style="left:1126px;top:18px;font-size:25.5px;color:#919191;-webkit-text-stroke:0.7px #919191;">?</div>
<div class="t" style="left:80px;top:122px;font-size:12.5px;color:#0565c6;transform:scaleX(0.8732);">SETUP</div>
<div class="t" style="left:119.8px;top:122px;font-size:11px;color:#3e3e3c;">&gt;</div>
<div class="t" style="left:129.5px;top:122px;font-size:12.5px;color:#0565c6;transform:scaleX(0.9113);">OBJECT MANAGER</div>
<div class="t" style="left:80px;top:143px;font-size:20px;color:#080707;font-weight:700;transform:scaleX(0.9877);">Sync Connection</div>
<div class="t" style="left:42px;top:223px;font-size:13.5px;color:#080707;transform:scaleX(0.9951);">Details</div>
<div class="t" style="left:42px;top:260px;font-size:13.5px;color:#080707;font-weight:700;transform:scaleX(0.9396);">Fields &amp; Relationships</div>
<div class="t" style="left:42px;top:297px;font-size:13.5px;color:#080707;transform:scaleX(0.9427);">Page Layouts</div>
<div class="t" style="left:42px;top:334px;font-size:13.5px;color:#080707;transform:scaleX(0.9681);">Lightning Record Pages</div>
<div class="t" style="left:42px;top:371px;font-size:13.5px;color:#080707;">Buttons, Links, and Actions</div>
<div class="t" style="left:42px;top:408px;font-size:13.5px;color:#080707;transform:scaleX(0.9933);">Compact Layouts</div>
<div class="t" style="left:42px;top:445px;font-size:13.5px;color:#080707;transform:scaleX(0.9467);">Field Sets</div>
<div class="t" style="left:42px;top:482px;font-size:13.5px;color:#080707;transform:scaleX(1.0167);">Object Limits</div>
<div class="t" style="left:42px;top:519px;font-size:13.5px;color:#080707;transform:scaleX(0.9434);">Record Types</div>
<div class="t" style="left:42px;top:556px;font-size:13.5px;color:#080707;transform:scaleX(0.9800);">Related Lookup Filters</div>
<div class="t" style="left:42px;top:593px;font-size:13.5px;color:#080707;transform:scaleX(0.9449);">Triggers</div>
<div class="t" style="left:258px;top:215px;font-size:18px;color:#080707;font-weight:700;transform:scaleX(0.9771);">Fields &amp; Relationships</div>
<div class="t" style="left:258px;top:235px;font-size:12px;color:#080707;transform:scaleX(1.0313);">17 Items, Sorted by Field Label</div>
<div class="t" style="left:725px;top:221px;font-size:13.5px;color:#3e3e3c;transform:scaleX(0.9937);">Quick Find</div>
<div class="t" style="left:909px;top:220px;font-size:13.5px;color:#1b5297;transform:scaleX(1.0037);">New</div>
<div class="t" style="left:969px;top:220px;font-size:13.5px;color:#1b5297;transform:scaleX(0.9950);">Field Dependencies</div>
<div class="t" style="left:1121px;top:220px;font-size:13.5px;color:#1b5297;transform:scaleX(0.9817);">Set History Tracking</div>
<div class="t" style="left:258px;top:271px;font-size:12.5px;color:#1068c6;font-weight:700;letter-spacing:0.79px;transform:scaleX(0.9200);">FIELD LABEL</div>
<div class="t" style="left:454px;top:271px;font-size:12.5px;color:#1068c6;font-weight:700;letter-spacing:1.31px;transform:scaleX(0.9200);">FIELD NAME</div>
<div class="t" style="left:733px;top:271px;font-size:12.5px;color:#1068c6;font-weight:700;letter-spacing:1.01px;transform:scaleX(0.9200);">DATA TYPE</div>
<div class="t" style="left:921px;top:271px;font-size:12.5px;color:#1068c6;font-weight:700;letter-spacing:1.26px;transform:scaleX(0.9200);">CONTROLLING FIELD</div>
<div class="t" style="left:1104px;top:271px;font-size:12.5px;color:#1068c6;font-weight:700;letter-spacing:1.58px;transform:scaleX(0.9200);">INDEXED</div>
<div class="t" style="left:258px;top:307px;font-size:13.5px;color:#0565c6;transform:scaleX(1.0234);">Activate After Validation</div>
<div class="t" style="left:454px;top:307px;font-size:13.5px;color:#080707;transform:scaleX(1.0133);">B25__Activate_After_Validation__c</div>
<div class="t" style="left:733px;top:307px;font-size:13.5px;color:#080707;transform:scaleX(0.9967);">Checkbox</div>
<div class="t" style="left:258px;top:356px;font-size:13.5px;color:#0565c6;transform:scaleX(1.0083);">Active</div>
<div class="t" style="left:454px;top:356px;font-size:13.5px;color:#080707;transform:scaleX(1.0082);">B25__Active__c</div>
<div class="t" style="left:733px;top:356px;font-size:13.5px;color:#080707;transform:scaleX(0.9967);">Checkbox</div>
<div class="t" style="left:258px;top:405px;font-size:13.5px;color:#0565c6;transform:scaleX(1.0116);">Calendar Id</div>
<div class="t" style="left:454px;top:405px;font-size:13.5px;color:#080707;transform:scaleX(1.0060);">B25__Calendar_Id__c</div>
<div class="t" style="left:733px;top:405px;font-size:13.5px;color:#080707;transform:scaleX(1.0232);">Text(255)</div>
<div class="t" style="left:258px;top:454px;font-size:13.5px;color:#0565c6;transform:scaleX(1.0032);">Calendar Name</div>
<div class="t" style="left:454px;top:454px;font-size:13.5px;color:#080707;">B25__Calendar_Name__c</div>
<div class="t" style="left:733px;top:454px;font-size:13.5px;color:#080707;transform:scaleX(1.0232);">Text(255)</div>
<div class="t" style="left:258px;top:497px;font-size:13.5px;color:#0565c6;transform:scaleX(0.9642);">Created By</div>
<div class="t" style="left:454px;top:497px;font-size:13.5px;color:#080707;transform:scaleX(0.9973);">CreatedById</div>
<div class="t" style="left:733px;top:497px;font-size:13.5px;color:#080707;transform:scaleX(1.0099);">Lookup(User)</div>
<div class="t" style="left:258px;top:539px;font-size:13.5px;color:#0565c6;transform:scaleX(1.0114);">Delta Token</div>
<div class="t" style="left:454px;top:539px;font-size:13.5px;color:#080707;transform:scaleX(1.0059);">B25__Delta_Token__c</div>
<div class="t" style="left:733px;top:539px;font-size:13.5px;color:#080707;transform:scaleX(1.0059);">Long Text Area(32768)</div>
<div class="t" style="left:258px;top:582px;font-size:13.5px;color:#0565c6;transform:scaleX(0.9900);">Last Modified By</div>
<div class="t" style="left:454px;top:582px;font-size:13.5px;color:#080707;transform:scaleX(1.0175);">LastModifiedById</div>
<div class="t" style="left:733px;top:582px;font-size:13.5px;color:#080707;transform:scaleX(1.0099);">Lookup(User)</div>
</body>
</html>
